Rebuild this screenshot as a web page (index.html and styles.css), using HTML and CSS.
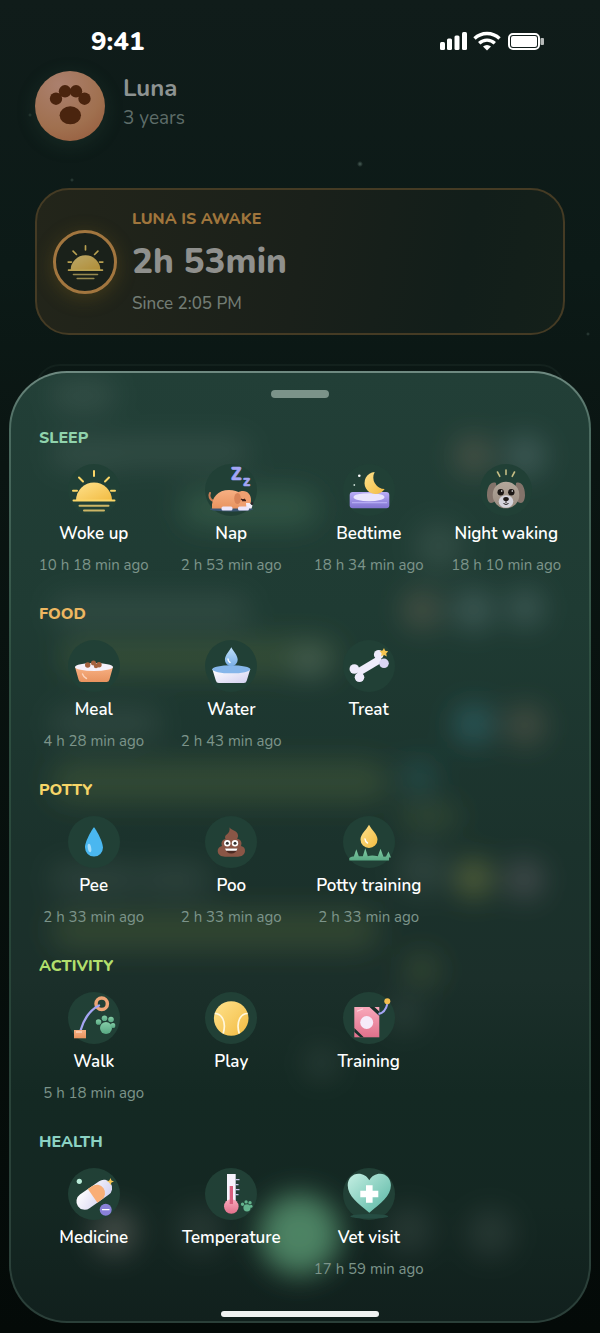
FILE: index.html
```html
<!DOCTYPE html>
<html lang="en">
<head>
    <meta charset="UTF-8">
    <meta name="viewport" content="width=device-width, initial-scale=1.0">
    <title>Luna</title>
    <link rel="stylesheet" href="styles.css">
</head>
<body>
    <!-- Shared gradients and symbols -->
    <svg class="defs" width="0" height="0" aria-hidden="true">
        <defs>
            <linearGradient id="gold" x1="0" y1="0" x2="1" y2="1">
                <stop offset="0" stop-color="#ffe28c"/>
                <stop offset="1" stop-color="#f2bb42"/>
            </linearGradient>
            <linearGradient id="orange" x1="0" y1="0" x2="0" y2="1">
                <stop offset="0" stop-color="#f7b083"/>
                <stop offset="1" stop-color="#e8935f"/>
            </linearGradient>
            <linearGradient id="purple" x1="0" y1="0" x2="0" y2="1">
                <stop offset="0" stop-color="#b9acf7"/>
                <stop offset="1" stop-color="#8173d0"/>
            </linearGradient>
            <linearGradient id="white" x1="0" y1="0" x2="1" y2="1">
                <stop offset="0" stop-color="#ffffff"/>
                <stop offset="1" stop-color="#d3d0f0"/>
            </linearGradient>
            <linearGradient id="blue" x1="0" y1="0" x2="0" y2="1">
                <stop offset="0" stop-color="#bfe0fb"/>
                <stop offset="1" stop-color="#79aee6"/>
            </linearGradient>
            <linearGradient id="pink" x1="0" y1="0" x2="0" y2="1">
                <stop offset="0" stop-color="#f9a9bb"/>
                <stop offset="1" stop-color="#e0708b"/>
            </linearGradient>
            <linearGradient id="green" x1="0" y1="0" x2="0" y2="1">
                <stop offset="0" stop-color="#84cda6"/>
                <stop offset="1" stop-color="#58a883"/>
            </linearGradient>
            <linearGradient id="mint" x1="0" y1="0" x2="1" y2="1">
                <stop offset="0" stop-color="#c5efe3"/>
                <stop offset="1" stop-color="#56b5a2"/>
            </linearGradient>
            <linearGradient id="fur" x1="0" y1="0" x2="0" y2="1">
                <stop offset="0" stop-color="#b3a79b"/>
                <stop offset="1" stop-color="#9a8c80"/>
            </linearGradient>
            <filter id="soft" x="-50%" y="-50%" width="200%" height="200%">
                <feGaussianBlur stdDeviation="14"/>
            </filter>
        </defs>
        <symbol id="sun" viewBox="0 0 52 52">
            <path d="M8 36.500a18 18 0 0 1 36 0z" fill="url(#gold)"/>
            <g stroke="#fbd668" stroke-width="2" stroke-linecap="round">
                <path d="M5.500 36.500h41M26 7v5M11 13.500l4 4M41 13.500l-4 4M5 26.700h4M43 26.700h4"/>
                <path d="M11.500 41.700h29M16 46.500h20" stroke="#cdb666"/>
            </g>
        </symbol>
        <symbol id="paw" viewBox="0 0 20 20">
            <circle cx="10.5" cy="13" r="6"/>
            <circle cx="3" cy="7" r="2.8"/>
            <circle cx="9" cy="3.2" r="2.8"/>
            <circle cx="15.5" cy="4.5" r="2.8"/>
            <circle cx="17.5" cy="10.5" r="2.5"/>
        </symbol>
    </svg>

    <main class="screen">
        <header class="status-bar">
            <span class="clock">9:41</span>
            <svg class="status-icons" viewBox="0 0 105 20" aria-label="Signal, Wi-Fi, battery" role="img">
                <g fill="#fff">
                    <rect x="0" y="11" width="5" height="8" rx="1.5"/>
                    <rect x="7" y="7.5" width="5" height="11.5" rx="1.5"/>
                    <rect x="14.5" y="4.5" width="5" height="14.5" rx="1.5"/>
                    <rect x="22" y="1" width="5" height="18" rx="1.5"/>
                    <path d="M43 15.500a6 6 0 0 1 8 0l-4 4z"/>
                    <rect x="71" y="5" width="26" height="11" rx="2"/>
                    <rect x="100.5" y="7" width="3.5" height="7" rx="1" opacity=".7"/>
                </g>
                <g fill="none" stroke="#fff" stroke-width="3.4">
                    <path d="M34.500 7.500a18 18 0 0 1 25 0"/>
                    <path d="M39.200 12.200a11.500 11.500 0 0 1 15.600 0"/>
                </g>
                <rect x="69" y="3" width="30" height="15" rx="4" fill="none" stroke="#fff" stroke-width="2"/>
            </svg>
        </header>

        <section class="profile">
            <svg class="avatar" viewBox="0 0 70 70" aria-hidden="true">
                <g fill="#4a240e">
                    <circle cx="21" cy="27.7" r="6.2"/>
                    <circle cx="30" cy="20.3" r="6.2"/>
                    <circle cx="41" cy="20.3" r="6.2"/>
                    <circle cx="49.5" cy="27.7" r="6.2"/>
                    <ellipse cx="35.3" cy="44.3" rx="10.7" ry="9"/>
                </g>
            </svg>
            <div>
                <h1>Luna</h1>
                <p class="age">3 years</p>
            </div>
        </section>

        <section class="status-card">
            <div class="ring">
                <svg viewBox="0 0 52 52" aria-hidden="true"><use href="#sun"/></svg>
            </div>
            <div>
                <p class="state">LUNA IS AWAKE</p>
                <p class="duration">2h 53min</p>
                <p class="since">Since 2:05 PM</p>
            </div>
        </section>

        <div class="next-card"></div>

        <section class="sheet">
            <!-- Timeline showing through the frosted sheet -->
            <svg class="glow" viewBox="0 0 581 953" preserveAspectRatio="none" aria-hidden="true">
                <g filter="url(#soft)">
                    <g fill="#c8d2c8" opacity=".1">
                        <rect x="40" y="8" width="65" height="30" rx="15"/>
                        <rect x="40" y="66" width="80" height="30" rx="15"/>
                        <rect x="110" y="66" width="130" height="26" rx="13"/>
                        <circle cx="430" cy="174" r="24"/>
                        <rect x="40" y="224" width="200" height="28" rx="14"/>
                        <rect x="40" y="338" width="110" height="28" rx="14"/>
                        <rect x="40" y="494" width="90" height="28" rx="14"/>
                        <rect x="130" y="494" width="70" height="28" rx="14"/>
                        <circle cx="413" cy="500" r="24"/>
                        <circle cx="312" cy="694" r="16"/>
                        <circle cx="395" cy="645" r="16"/>
                        <circle cx="190" cy="862" r="24"/>
                        <circle cx="400" cy="862" r="24"/>
                        <circle cx="482" cy="865" r="24"/>
                    </g>
                    <g fill="#8a9a50" opacity=".2">
                        <rect x="50" y="266" width="280" height="38" rx="19"/>
                        <rect x="40" y="390" width="340" height="42" rx="21"/>
                        <rect x="390" y="434" width="60" height="24" rx="12"/>
                        <rect x="40" y="540" width="330" height="40" rx="20"/>
                        <circle cx="413" cy="600" r="18"/>
                    </g>
                    <g fill="#5f9a70" opacity=".24">
                        <rect x="170" y="116" width="140" height="40" rx="20"/>
                    </g>
                    <g fill="#a08070" opacity=".28">
                        <circle cx="465" cy="83" r="20"/>
                        <circle cx="413" cy="238" r="20"/>
                        <circle cx="517" cy="354" r="20"/>
                    </g>
                    <g fill="#8aa0a8" opacity=".28">
                        <circle cx="517" cy="83" r="20"/>
                        <circle cx="465" cy="238" r="20"/>
                        <circle cx="517" cy="236" r="18"/>
                        <circle cx="300" cy="290" r="14"/>
                    </g>
                    <circle cx="465" cy="353" r="20" fill="#3f8fa0" opacity=".36"/>
                    <circle cx="410" cy="406" r="17" fill="#3f8f98" opacity=".26"/>
                    <circle cx="465" cy="508" r="19" fill="#a5a44e" opacity=".4"/>
                    <circle cx="516" cy="509" r="19" fill="#957f90" opacity=".32"/>
                    <circle cx="104" cy="864" r="23" fill="#a89a94" opacity=".32"/>
                    <circle cx="290" cy="866" r="41" fill="#54906c" opacity=".88"/>
                </g>
            </svg>

            <button class="handle" type="button" aria-label="Close"></button>

            <section class="group">
                <h2 class="sleep">SLEEP</h2>
                <div class="actions">
                    <button class="action" type="button">
                        <svg class="icon" viewBox="0 0 52 52" aria-hidden="true"><use href="#sun"/></svg>
                        <span class="label">Woke up</span>
                        <span class="time">10 h 18 min ago</span>
                    </button>
                    <button class="action" type="button">
                        <svg class="icon" viewBox="0 0 52 52" aria-hidden="true">
                            <ellipse cx="26.5" cy="45.3" rx="21.5" ry="2.2" fill="#3a5573"/>
                            <path d="M9 37c-5-1-5-6-4-8" fill="none" stroke="#c97d55" stroke-width="2" stroke-linecap="round"/>
                            <path d="M7 44.500c-1-11 6-18.500 17-18.500 10 0 16 5 16 12v6.500z" fill="url(#orange)"/>
                            <path d="M31 33c0-4 3-6 7-6 5 0 8 4 8 9 0 4-2 8-6 8s-9-4-9-11z" fill="#ef9f70"/>
                            <ellipse cx="32.5" cy="34.5" rx="3.3" ry="5.6" fill="#d88458"/>
                            <path d="M36 35q2 1.500 4 0M37 36.500h4" fill="none" stroke="#40201a" stroke-width="1.3"/>
                            <path d="M41 39h3.500l3 2.500-1 3h-5z" fill="#f3eefb"/>
                            <circle cx="47" cy="39.5" r="1.3" fill="#29202a"/>
                            <rect x="16.5" y="42.5" width="11" height="4" rx="1.5" fill="#ece6fb"/>
                            <rect x="33" y="42.5" width="11" height="4" rx="1.5" fill="#ece6fb"/>
                            <g class="snore"><text x="26" y="16" font-size="17">Z</text><text x="38" y="22" font-size="15">z</text></g>
                        </svg>
                        <span class="label">Nap</span>
                        <span class="time">2 h 53 min ago</span>
                    </button>
                    <button class="action" type="button">
                        <svg class="icon" viewBox="0 0 52 52" aria-hidden="true">
                            <rect x="6.7" y="28" width="39.6" height="16.3" rx="3" fill="url(#purple)"/>
                            <path d="M9 38.700h35" stroke="#b5aaf2" stroke-width="1.2"/>
                            <ellipse cx="26" cy="33.2" rx="15.5" ry="4" fill="#e9e4fd"/>
                            <path d="M31.700 8a11 11 0 1 0 10 17a11.500 11.500 0 0 1-10-17z" fill="url(#gold)"/>
                            <circle cx="16.3" cy="11.7" r="1.3" fill="#fff"/>
                            <circle cx="11.3" cy="21" r=".9" fill="#c4d8d0"/>
                        </svg>
                        <span class="label">Bedtime</span>
                        <span class="time">18 h 34 min ago</span>
                    </button>
                    <button class="action" type="button">
                        <svg class="icon" viewBox="0 0 52 52" aria-hidden="true">
                            <path d="M17.500 8l2.300 4.300M26 6v4.500M34.500 8l-2.300 4.300" stroke="#c5bd85" stroke-width="1.6" stroke-linecap="round"/>
                            <path d="M16 19c-4-2-9 2-9 12 0 5 2 8 4 8 3 0 6-3 6-8zM36 19c4-2 9 2 9 12 0 5-2 8-4 8-3 0-6-3-6-8z" fill="#83736a"/>
                            <circle cx="26" cy="31" r="13.3" fill="url(#fur)"/>
                            <ellipse cx="26" cy="37.5" rx="7.3" ry="6.3" fill="#d5d4dc"/>
                            <circle cx="20.7" cy="28.2" r="3.2" fill="#1c1715"/>
                            <circle cx="31.3" cy="28.2" r="3.2" fill="#1c1715"/>
                            <circle cx="21.7" cy="27" r=".8" fill="#fff"/>
                            <circle cx="32.3" cy="27" r=".8" fill="#fff"/>
                            <ellipse cx="26" cy="35" rx="2.8" ry="2" fill="#1c1715"/>
                            <path d="M26 36v3M23.500 39.500q2.500 2 5 0" fill="none" stroke="#1c1715"/>
                        </svg>
                        <span class="label">Night waking</span>
                        <span class="time">18 h 10 min ago</span>
                    </button>
                </div>
            </section>

            <section class="group">
                <h2 class="food">FOOD</h2>
                <div class="actions">
                    <button class="action" type="button">
                        <svg class="icon" viewBox="0 0 52 52" aria-hidden="true">
                            <path d="M7 27h38l-3.500 12.500q-.6 2.500-3 2.500h-25q-2.400 0-3-2.500z" fill="url(#orange)"/>
                            <ellipse cx="26" cy="27" rx="19" ry="4" fill="#f5f1fb"/>
                            <g fill="#a4623f">
                                <circle cx="19.7" cy="25" r="2.7"/>
                                <circle cx="25.5" cy="23" r="2.5"/>
                                <circle cx="31" cy="24.8" r="2.7"/>
                                <circle cx="28" cy="26" r="2.2"/>
                            </g>
                            <path d="M14.500 34q1 3 4 4.500" fill="none" stroke="#fbd3bb" stroke-width="1.4" stroke-linecap="round"/>
                        </svg>
                        <span class="label">Meal</span>
                        <span class="time">4 h 28 min ago</span>
                    </button>
                    <button class="action" type="button">
                        <svg class="icon" viewBox="0 0 52 52" aria-hidden="true">
                            <path d="M7.300 29h38l-3.500 11.500q-.6 2.500-3 2.500h-25q-2.400 0-3-2.500z" fill="url(#white)"/>
                            <ellipse cx="26.3" cy="29.3" rx="19" ry="4" fill="#86b6ea"/>
                            <path d="M26.300 7.300c2 4 6.400 8 6.400 12.500a6.400 6.400 0 0 1-12.800 0c0-4.500 4.400-8.500 6.400-12.500z" fill="url(#blue)"/>
                            <path d="M23 19q0 2.500 2 3.500" fill="none" stroke="#fff" stroke-width="1.4" stroke-linecap="round"/>
                        </svg>
                        <span class="label">Water</span>
                        <span class="time">2 h 43 min ago</span>
                    </button>
                    <button class="action" type="button">
                        <svg class="icon" viewBox="0 0 52 52" aria-hidden="true">
                            <path d="M14.500 32.800l23.500-14" stroke="#efecfb" stroke-width="7.5"/>
                            <g fill="#eeeafb">
                                <circle cx="35.7" cy="14.7" r="4.8"/>
                                <circle cx="41" cy="23.3" r="4.8" fill="#dad5f3"/>
                                <circle cx="11.3" cy="29" r="4.8"/>
                                <circle cx="16.5" cy="37.3" r="4.8"/>
                            </g>
                            <path d="M41 8l1.200 2.800 3 .4-2 2.200.6 3.200-2.800-1.600-2.900 1.200.5-3-2-2.200 3-.4z" fill="#f6c451"/>
                        </svg>
                        <span class="label">Treat</span>
                    </button>
                </div>
            </section>

            <section class="group">
                <h2 class="potty">POTTY</h2>
                <div class="actions">
                    <button class="action" type="button">
                        <svg class="icon" viewBox="0 0 52 52" aria-hidden="true">
                            <path d="M26 11.300c.6 0 9 13.500 9 20.300a9 9 0 0 1-18 0c0-6.800 8.400-20.300 9-20.300z" fill="#4ab7f0"/>
                            <ellipse cx="21.5" cy="32" rx="1.7" ry="4.2" fill="#a4ddfa" transform="rotate(-10 21.5 32)"/>
                        </svg>
                        <span class="label">Pee</span>
                        <span class="time">2 h 33 min ago</span>
                    </button>
                    <button class="action" type="button">
                        <svg class="icon" viewBox="0 0 52 52" aria-hidden="true">
                            <path d="M24.500 11.300c1 3 8 3 8.500 8 .2 1.500-.3 2.700-1 3.500 3.500.3 5.500 3.500 4 7.200 3 .5 4.200 2.700 4 5-.3 4-3.500 5.700-7 5.700H20c-4 0-7-1.700-7.300-5.400-.2-2.500 1.300-4.700 4.300-5.300-1.500-3.500.5-6.500 3.500-7-1-1.500-.5-3.500 1.500-4.700 2-1.400 3-3.600 2.500-7z" fill="#8a5646"/>
                            <circle cx="22.3" cy="27.2" r="3.2" fill="#fff"/>
                            <circle cx="30" cy="27.2" r="3.2" fill="#fff"/>
                            <circle cx="22.3" cy="27.2" r="1.5" fill="#333"/>
                            <circle cx="30" cy="27.2" r="1.5" fill="#333"/>
                            <path d="M20 32.500h12.500q-1.500 5-6.200 5t-6.300-5z" fill="#4a2a22"/>
                            <path d="M20 32.500h12.500l-1 2.300h-10.500z" fill="#fff"/>
                        </svg>
                        <span class="label">Poo</span>
                        <span class="time">2 h 33 min ago</span>
                    </button>
                    <button class="action" type="button">
                        <svg class="icon" viewBox="0 0 52 52" aria-hidden="true">
                            <path d="M26 8.700c2.500 5 8.500 9.500 8.500 14.700a8.500 8.500 0 0 1-17 0c0-5.200 6-9.700 8.500-14.700z" fill="url(#gold)"/>
                            <path d="M22 23q.5 3 2.500 4" fill="none" stroke="#fff" stroke-width="1.5" stroke-linecap="round"/>
                            <path d="M6.300 42q2-2 4.500-1.500l2.500-7.200 2.500 7h4l2.500-8 2.500 8q4-1.500 10 0l2.700-7.500 3 8 2.500-.3 2.500-5 2.500 6h-2v3H6.300z" fill="url(#green)"/>
                        </svg>
                        <span class="label">Potty training</span>
                        <span class="time">2 h 33 min ago</span>
                    </button>
                </div>
            </section>

            <section class="group">
                <h2 class="activity">ACTIVITY</h2>
                <div class="actions">
                    <button class="action" type="button">
                        <svg class="icon" viewBox="0 0 52 52" aria-hidden="true">
                            <circle cx="33.7" cy="11.7" r="5.7" fill="none" stroke="#eea577" stroke-width="3.5"/>
                            <path d="M31 13.500Q18 20 12.700 38" fill="none" stroke="#a5a5f3" stroke-width="2.3" stroke-linecap="round"/>
                            <rect x="6" y="38" width="12" height="8.3" fill="url(#orange)"/>
                            <path d="M8 40h6" stroke="#fbd3bb" stroke-width="1.3"/>
                            <use href="#paw" x="27.5" y="23" width="20" height="20" fill="url(#green)"/>
                        </svg>
                        <span class="label">Walk</span>
                        <span class="time">5 h 18 min ago</span>
                    </button>
                    <button class="action" type="button">
                        <svg class="icon" viewBox="0 0 52 52" aria-hidden="true">
                            <circle cx="26.2" cy="26.5" r="17.3" fill="url(#gold)"/>
                            <path d="M9.700 21.500c7 0 12 8 8.500 20M42.700 21.500c-7 0-12 8-8.500 20" fill="none" stroke="#fff7dc" stroke-width="1.7"/>
                        </svg>
                        <span class="label">Play</span>
                    </button>
                    <button class="action" type="button">
                        <svg class="icon" viewBox="0 0 52 52" aria-hidden="true">
                            <rect x="11.3" y="15" width="25" height="30.3" fill="url(#pink)"/>
                            <path d="M26.500 15h5l4.800 4.500v4.500zM11.300 36v4l6 5.300h3.500z" fill="#18302b"/>
                            <path d="M14.500 19l5-2" stroke="#fcd5dd" stroke-width="1.3" stroke-linecap="round"/>
                            <circle cx="23.7" cy="30.5" r="6.5" fill="#f6ebfa"/>
                            <path d="M35.500 22q7-1.500 8.800-10" fill="none" stroke="#a5a5f3" stroke-width="2"/>
                            <circle cx="44.3" cy="9.3" r="3" fill="#f4bf50"/>
                        </svg>
                        <span class="label">Training</span>
                    </button>
                </div>
            </section>

            <section class="group">
                <h2 class="health">HEALTH</h2>
                <div class="actions">
                    <button class="action" type="button">
                        <svg class="icon" viewBox="0 0 52 52" aria-hidden="true">
                            <g transform="translate(26.3 26.7) rotate(-35)">
                                <rect x="-20" y="-8.3" width="40" height="16.6" rx="8.3" fill="url(#white)"/>
                                <path d="M-2-8.300h5a8.300 8.300 0 0 1 0 16.600h-5z" fill="#f9ae76"/>
                            </g>
                            <path d="M42.500 10l1 2.500 2.500 1-2.500 1-1 2.700-1.200-2.700-2.300-1 2.300-1z" fill="#f6c451"/>
                            <circle cx="37.7" cy="41.7" r="6" fill="#8980d8"/>
                            <path d="M34 41.700h7.500" stroke="#fff" stroke-width="1.3"/>
                            <circle cx="11.3" cy="13.3" r="2.6" fill="#b9ecd9"/>
                        </svg>
                        <span class="label">Medicine</span>
                    </button>
                    <button class="action" type="button">
                        <svg class="icon" viewBox="0 0 52 52" aria-hidden="true">
                            <rect x="22" y="6" width="8.7" height="28" fill="#f6f3fc"/>
                            <path d="M30.500 11.700h4M30.500 16.700h3M30.500 21.700h4M30.500 26.700h3" stroke="#c9c5ea" stroke-width="1.3"/>
                            <circle cx="26.3" cy="38.5" r="7.3" fill="url(#pink)"/>
                            <rect x="24.7" y="18" width="3.3" height="18" fill="#d85f7d"/>
                            <use href="#paw" x="35.7" y="32" width="12" height="12" fill="#63b48d"/>
                        </svg>
                        <span class="label">Temperature</span>
                    </button>
                    <button class="action" type="button">
                        <svg class="icon" viewBox="0 0 52 52" aria-hidden="true">
                            <ellipse cx="26.3" cy="48.3" rx="19" ry="2.3" fill="#264d43"/>
                            <path d="M26.300 44.700C15 35.500 4.700 28 4.700 17.300 4.700 10.500 9.500 5.700 15.500 5.700c4.500 0 8.500 2.300 10.800 6.500 2.300-4.200 6.300-6.500 10.800-6.500 6 0 10.800 4.800 10.800 11.600 0 10.700-10.300 18.200-21.600 27.400z" fill="url(#mint)"/>
                            <path d="M23 17.300h6.600v5.500h5.700v6.500h-5.700v5.500H23v-5.500h-5.700v-6.500H23z" fill="#fff"/>
                        </svg>
                        <span class="label">Vet visit</span>
                        <span class="time">17 h 59 min ago</span>
                    </button>
                </div>
            </section>

            <div class="home-indicator"></div>
        </section>
    </main>
</body>
</html>
```

FILE: styles.css
```css
* {
    box-sizing: border-box;
}

body {
    margin: 0;
    font-family: Nunito, 'Open Sans', 'Noto Sans', sans-serif;
    color: #ffffff;
    background: linear-gradient(#101c1a 0%, #0c1a17 20%, #0a1512 35%, #040a08 100%);
}

h1,
h2,
p {
    margin: 0;
}

button {
    padding: 0;
    border: none;
    background: none;
    color: inherit;
    font-family: inherit;
    cursor: pointer;
}

.defs {
    position: absolute;
}

/* Faint stars on the backdrop */
.screen {
    min-height: 100vh;
    padding-bottom: 9px;
    background:
        radial-gradient(circle at 60% 164px, #4a5f58 0, transparent 3px),
        radial-gradient(circle at 12% 180px, #33453f 0, transparent 2px),
        radial-gradient(circle at 98% 334px, #33453f 0, transparent 2px),
        radial-gradient(circle at 5% 115px, #2a3d36 0, transparent 2px);
}

.status-bar {
    display: flex;
    justify-content: space-between;
    align-items: center;
    height: 71px;
    padding: 11px 55px 0 91px;
}

.clock {
    font-size: 26px;
    font-weight: 800;
}

.status-icons {
    width: 105px;
    height: 20px;
}

.profile {
    display: flex;
    align-items: flex-start;
    gap: 18px;
    padding: 0 35px;
}

.avatar {
    width: 70px;
    height: 70px;
    border-radius: 50%;
    background: radial-gradient(circle at 35% 20%, #ab806e, #a0704f 60%, #94583a);
    box-shadow: 0 4px 20px rgba(70, 120, 95, 0.18);
}

.profile h1 {
    font-size: 24px;
    line-height: 34px;
    font-weight: 700;
    color: #8d9392;
}

.age {
    font-size: 19px;
    line-height: 26px;
    color: #5e6d69;
}

.status-card {
    display: flex;
    align-items: center;
    gap: 15px;
    margin: 47px 35px 0;
    padding: 13px 16px;
    border: 2px solid #453b24;
    border-radius: 34px;
    background: linear-gradient(100deg, #23251a, #1a201a 50%, #121e1a 80%, #14201a);
}

.ring {
    display: flex;
    justify-content: center;
    align-items: center;
    width: 64px;
    height: 64px;
    border: 3px solid #a2763f;
    border-radius: 50%;
    background: #1a211a;
    box-shadow: 0 4px 20px rgba(150, 115, 30, 0.3);
}

.ring svg {
    width: 43px;
    height: 43px;
    opacity: 0.7;
}

.state {
    font-size: 16px;
    line-height: 32px;
    font-weight: 800;
    color: #9f753c;
}

.duration {
    font-size: 35px;
    line-height: 53px;
    font-weight: 800;
    color: #8f908d;
}

.since {
    font-size: 17px;
    line-height: 32px;
    font-weight: 500;
    color: #727c74;
}

/* Only the top edge of this card clears the sheet */
.next-card {
    height: 50px;
    margin: 29px 35px 0;
    border: 2px solid #13211d;
    border-radius: 34px;
}

.sheet {
    position: relative;
    display: flex;
    flex-direction: column;
    margin: -43px 9px 0;
    padding: 11px 14px 4px;
    border: 2px solid transparent;
    border-radius: 58px;
    overflow: hidden;
    background:
        linear-gradient(#223f37 0%, #1f3b33 25%, #1b322c 50%, #1b2f2a 64%, #142923 76%, #142722 88%, #11201d 100%) padding-box,
        linear-gradient(#6f8a81 0%, #4c6c61 6%, #2f5042 30%, #284539 60%, #2b3f39 100%) border-box;
}

.glow {
    position: absolute;
    inset: 0;
    width: 100%;
    height: 100%;
}

.handle {
    position: relative;
    align-self: center;
    width: 58px;
    height: 20px;
}

.handle::before {
    content: "";
    display: block;
    height: 8px;
    border-radius: 4px;
    background: #7b9389;
}

.group {
    position: relative;
    min-height: 166px;
    margin-top: 22px;
}

.group + .group {
    margin-top: 10px;
}

.group h2 {
    padding-left: 14px;
    font-size: 16px;
    line-height: 24px;
    font-weight: 800;
}

.sleep {
    color: #90d3ac;
}

.food {
    color: #edb761;
}

.potty {
    color: #f6d568;
}

.activity {
    color: #b2df6c;
}

.health {
    color: #8bd2c3;
}

.actions {
    display: grid;
    grid-template-columns: repeat(4, 1fr);
    align-items: start;
    margin-top: 14px;
}

.action {
    display: flex;
    flex-direction: column;
    align-items: center;
}

.icon {
    width: 52px;
    height: 52px;
    border-radius: 50%;
    background: #214036;
    overflow: visible;
}

.snore {
    fill: #a3a5f5;
    stroke: #a3a5f5;
    stroke-width: 0.6px;
    font-weight: 800;
}

.label {
    margin-top: 6px;
    font-size: 17px;
    line-height: 24px;
    font-weight: 600;
    white-space: nowrap;
}

.time {
    margin-top: 8px;
    font-size: 15px;
    line-height: 22px;
    color: #7c948a;
    white-space: nowrap;
}

.home-indicator {
    position: relative;
    align-self: center;
    width: 158px;
    height: 6px;
    margin-top: 15px;
    border-radius: 3px;
    background: #f0f3f2;
}
```
